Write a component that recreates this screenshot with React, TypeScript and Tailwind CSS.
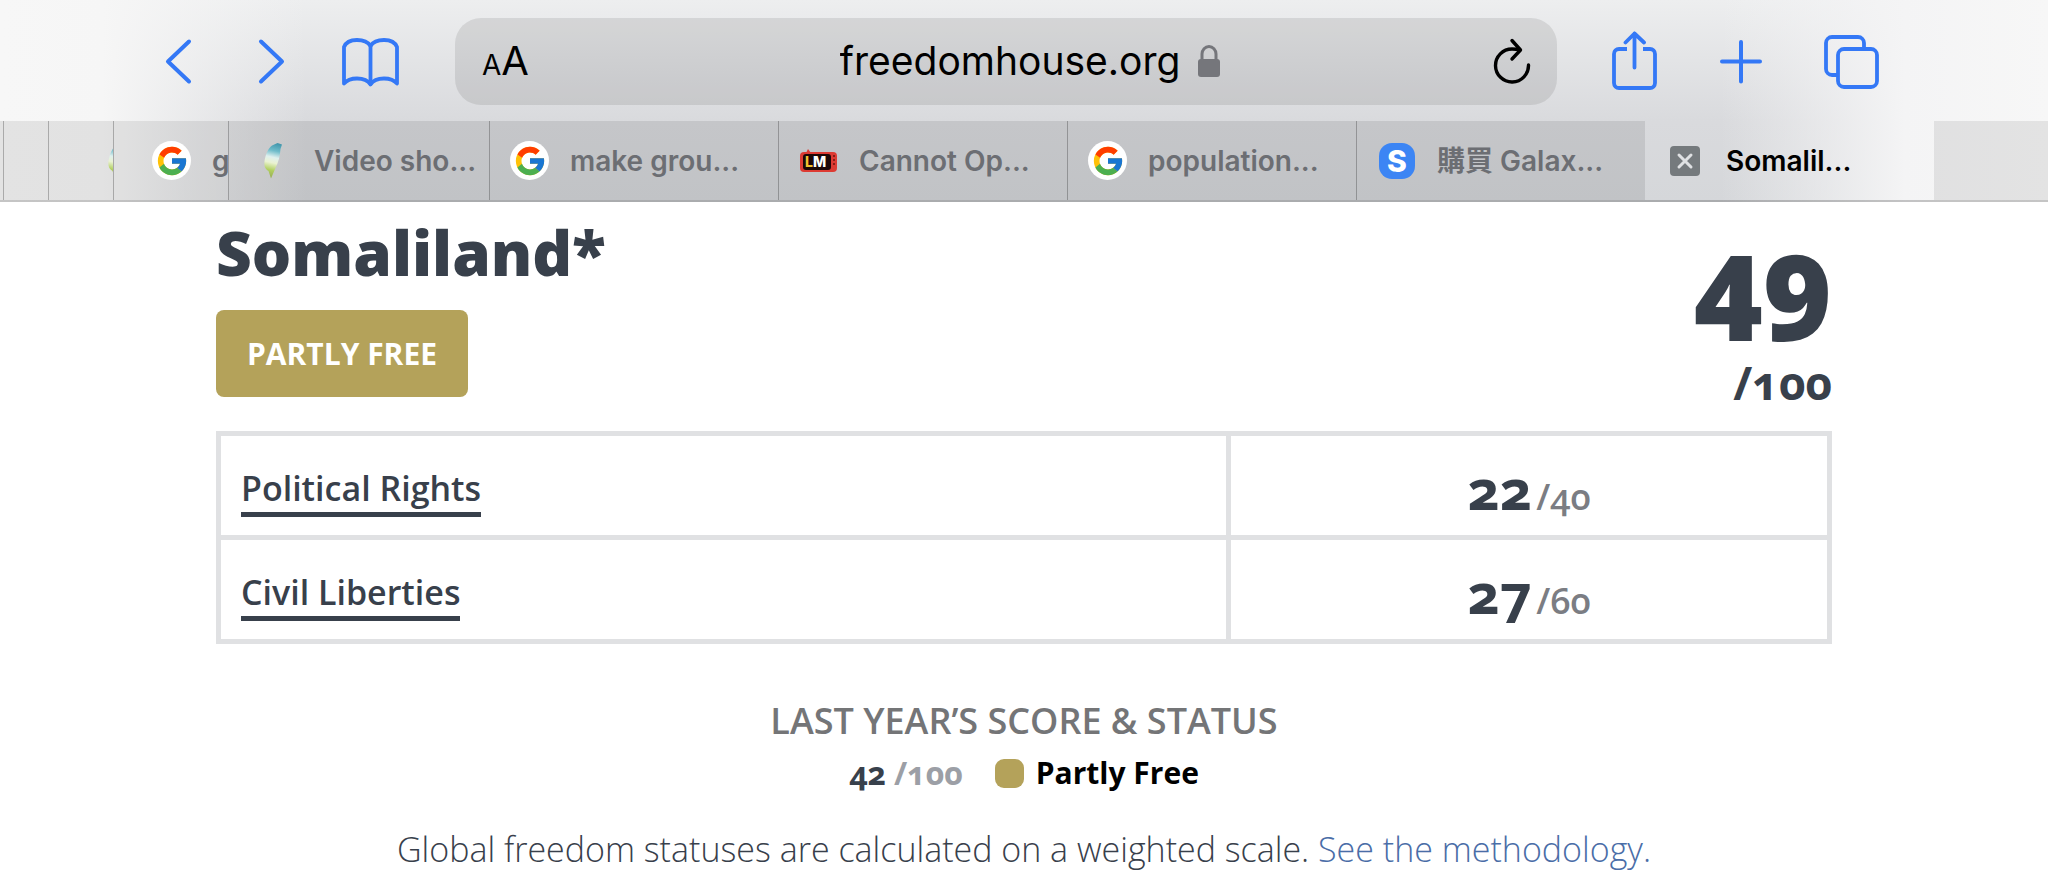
import { FcGoogle } from "react-icons/fc";

function GoogleMark() {
  return (
    <span className="flex size-[39px] shrink-0 items-center justify-center rounded-full bg-white">
      <FcGoogle className="size-[34px]" />
    </span>
  );
}

function FeatherMark() {
  return (
    <svg viewBox="0 0 39 39" className="size-[39px] shrink-0" aria-hidden="true">
      <defs>
        <linearGradient id="feather" gradientUnits="userSpaceOnUse" x1="24" y1="2" x2="16" y2="38">
          <stop offset="0" stopColor="#3f94aa" />
          <stop offset="0.22" stopColor="#6fbcca" />
          <stop offset="0.4" stopColor="#dff0ee" />
          <stop offset="0.55" stopColor="#eaf2d2" />
          <stop offset="0.75" stopColor="#b2d062" />
          <stop offset="1" stopColor="#93a850" />
        </linearGradient>
      </defs>
      <path d="M24.500 2 L29 3.500 L27.500 8 C27 15 25.500 21 22.500 27 L18 37.500 L15.500 30 C12 28 11 25 11.500 20 C12.500 14 15 7 19 4.500Z" fill="url(#feather)" />
    </svg>
  );
}

function LmMark() {
  return (
    <svg viewBox="0 0 39 39" className="size-[39px] shrink-0" aria-hidden="true">
      <rect x="1" y="11" width="37" height="20" rx="4" fill="#dd3b33" />
      <path d="M7 12 L9 8 L12 12Z" fill="#dd3b33" />
      <rect x="4" y="13" width="28" height="16" rx="3" fill="#1d0807" />
      <path d="M34 15h2M34 19h2M34 23h2" stroke="#6d1410" strokeWidth="1.500" />
      <text x="6" y="26" fontFamily="Inter, sans-serif" fontSize="14" fontWeight="800">
        <tspan fill="#f2c230">L</tspan>
        <tspan fill="#ffffff">M</tspan>
      </text>
    </svg>
  );
}

function SMark() {
  return (
    <span className="flex size-9 shrink-0 items-center justify-center rounded-[13px] bg-[#3c85f4] text-[30px] leading-none font-extrabold text-white">
      S
    </span>
  );
}

const tabs = [
  { title: "Video sho...", mark: <FeatherMark />, width: "w-[261px] pl-6 gap-[22px]" },
  { title: "make grou...", mark: <GoogleMark />, width: "w-[289px] pl-5 gap-[21px]" },
  { title: "Cannot Op...", mark: <LmMark />, width: "w-[289px] pl-5 gap-[21px]" },
  { title: "population...", mark: <GoogleMark />, width: "w-[289px] pl-5 gap-[21px]" },
  { title: "購買 Galax...", mark: <SMark />, width: "w-[288px] pl-[22px] gap-[22px]" },
];

const ratings = [
  { name: "Political Rights", score: "22", total: "/40" },
  { name: "Civil Liberties", score: "27", total: "/60" },
];

const iconButton = "flex h-[60px] w-[60px] shrink-0 items-center justify-center text-[#3478f6]";

function Toolbar() {
  return (
    <div className="flex h-[121px] items-center pt-[1px] pr-[167px] pl-[149px]">
      <nav className="flex items-center gap-8" aria-label="History">
        <button type="button" aria-label="Back" className={iconButton}>
          <svg viewBox="0 0 60 60" className="size-full" fill="none" stroke="currentColor" strokeWidth="4" strokeLinecap="round" strokeLinejoin="round">
            <path d="M40 10.500 L19 30.500 L40 50.500" />
          </svg>
        </button>
        <button type="button" aria-label="Forward" className={iconButton}>
          <svg viewBox="0 0 60 60" className="size-full" fill="none" stroke="currentColor" strokeWidth="4" strokeLinecap="round" strokeLinejoin="round">
            <path d="M20 10.500 L41 30.500 L20 50.500" />
          </svg>
        </button>
      </nav>
      <button type="button" aria-label="Bookmarks" className={`${iconButton} ml-10`}>
        <svg viewBox="0 0 60 60" className="size-full" fill="none" stroke="currentColor" strokeWidth="3.800" strokeLinecap="round" strokeLinejoin="round">
          <path d="M29.500 15 C27 11 22 9 16 9 C10 9 5 11 3 16 V52.500 C6 49 10 47.500 16 47.500 C22 47.500 27 49.500 29.500 53.500 C32 49.500 37 47.500 43 47.500 C49 47.500 53 49 56 52.500 V16 C54 11 49 9 43 9 C37 9 32 11 29.500 15Z" />
          <path d="M29.500 15V53" />
        </svg>
      </button>
      <div className="ml-[54px] flex h-[87px] flex-1 items-center justify-between rounded-[26px] bg-black/9 pr-[26px] pl-[27px] text-black">
        <button type="button" aria-label="Page settings" className="flex w-[85px] items-baseline">
          <span className="text-[28px] leading-none">A</span>
          <span className="text-[40px] leading-none">A</span>
        </button>
        <div className="flex items-center gap-[18px]">
          <input aria-label="Address" defaultValue="freedomhouse.org" className="field-sizing-content bg-transparent text-[39px] leading-[50px] outline-none" />
          <svg viewBox="0 0 22 32" className="h-8 w-[22px]" aria-hidden="true">
            <rect x="0" y="14" width="22" height="18" rx="3" fill="#75767b" />
            <path d="M4 15V9a7 7.500 0 0 1 14 0v6" fill="none" stroke="#75767b" strokeWidth="3" />
          </svg>
        </div>
        <button type="button" aria-label="Reload">
          <svg viewBox="0 0 38 46" className="h-[46px] w-[38px]" fill="none" stroke="currentColor" strokeWidth="3.400" strokeLinecap="round" strokeLinejoin="round">
            <path d="M26.500 12 C24 11 21 11 19 11 A16.500 16.500 0 1 0 35.500 27" />
            <path d="M19 2.500 L27.500 12 L19 21" />
          </svg>
        </button>
      </div>
      <div className="ml-12 flex gap-12">
        <button type="button" aria-label="Share" className={iconButton}>
          <svg viewBox="0 0 60 60" className="size-full" fill="none" stroke="currentColor" strokeWidth="3.800" strokeLinecap="round" strokeLinejoin="round">
            <path d="M22 18 H14 a5 5 0 0 0 -5 5 V52 a5 5 0 0 0 5 5 H45 a5 5 0 0 0 5 -5 V23 a5 5 0 0 0 -5 -5 H38" strokeLinecap="butt" />
            <path d="M29.500 36.500 V2.500 M20.500 11.500 L29.500 2.500 L39 11.500" />
          </svg>
        </button>
        <button type="button" aria-label="New tab" className={iconButton}>
          <svg viewBox="0 0 60 60" className="size-full" fill="none" stroke="currentColor" strokeWidth="4" strokeLinecap="round">
            <path d="M28 11 V50.500 M9 30.500 H47" />
          </svg>
        </button>
        <button type="button" aria-label="Show all tabs" className={iconButton}>
          <svg viewBox="0 0 60 60" className="size-full" fill="none" stroke="currentColor" strokeWidth="3.800" strokeLinejoin="round">
            <path d="M17 44 H11 a6 6 0 0 1 -6 -6 V12 a6 6 0 0 1 6 -6 H37 a6 6 0 0 1 6 6 V17" />
            <rect x="17" y="18" width="39" height="38" rx="6" />
          </svg>
        </button>
      </div>
    </div>
  );
}

function TabStrip() {
  return (
    <div role="tablist" className="flex h-[81px] border-b-2 border-black/20 text-[28px] font-semibold text-[#6c6e73]">
      <div className="w-1 shrink-0 border-r border-black/25 bg-black/8" />
      <div className="w-[45px] shrink-0 border-r border-black/25 bg-black/8" />
      <div className="flex w-[65px] shrink-0 items-center overflow-hidden border-r border-black/25 bg-black/8 pl-12">
        <FeatherMark />
      </div>
      <button type="button" role="tab" className="flex w-[115px] shrink-0 items-center gap-[21px] overflow-hidden border-r border-black/25 bg-black/8 pl-[38px]">
        <GoogleMark />
        <span>g</span>
      </button>
      {tabs.map((tab) => (
        <button key={tab.title} type="button" role="tab" className={`${tab.width} flex min-w-0 items-center overflow-hidden border-r border-black/25 bg-black/9 whitespace-nowrap last-of-type:border-r-0`}>
          {tab.mark}
          <span>{tab.title}</span>
        </button>
      ))}
      <div role="tab" aria-selected="true" className="flex w-[289px] min-w-0 items-center gap-[26px] pl-[25px] text-black">
        <button type="button" aria-label="Close tab" className="flex size-[30px] shrink-0 items-center justify-center rounded-[4px] bg-[#757a7d]">
          <svg viewBox="0 0 30 30" className="size-full" stroke="#dfe1e3" strokeWidth="3" strokeLinecap="round">
            <path d="M9 9 L21 21 M21 9 L9 21" />
          </svg>
        </button>
        <span>Somalil...</span>
      </div>
      <div className="min-w-0 flex-1 bg-black/8" />
    </div>
  );
}

export default function App() {
  return (
    <div className="min-h-screen bg-white font-['Open_Sans','Noto_Sans',sans-serif] text-[#38404b]">
      <header className="bg-[linear-gradient(to_right,#f7f7f7_0%,#f6f6f6_5%,transparent_15%,transparent_84%,#f4f4f5_93%,#f7f7f7_100%),linear-gradient(to_bottom,#edeeef_0%,#d9dadd_60%,#d5d7da_100%)] font-['Inter','Noto_Sans_CJK_TC',sans-serif]">
        <Toolbar />
        <TabStrip />
      </header>

      <main className="px-54 pt-[14px] oldstyle-nums">
        <section className="flex items-start justify-between">
          <div>
            <h1 className="text-[62px] leading-[72px] font-extrabold">Somaliland*</h1>
            <p className="mt-[22px] flex h-[87px] w-[252px] items-center justify-center rounded-lg bg-[#b4a25a] text-[30px] font-bold text-white">
              PARTLY FREE
            </p>
          </div>
          <p className="flex flex-col items-end pt-5 font-extrabold">
            <span className="text-[118px] leading-[120px] lining-nums">49</span>
            <span className="mt-[2px] text-[46px] leading-[48px] font-bold">/100</span>
          </p>
        </section>

        <table className="mt-[25px] w-full table-fixed border-collapse border-[5px] border-[#e0e1e3]">
          <colgroup>
            <col className="w-[62.700%]" />
            <col />
          </colgroup>
          <tbody>
            {ratings.map((rating) => (
              <tr key={rating.name} className="h-[104px] border-b-[5px] border-[#e0e1e3]">
                <th scope="row" className="border-r-[5px] border-[#e0e1e3] pt-[10px] pl-5 text-left font-normal">
                  <a href="#report" className="inline-block border-b-[5px] border-[#38404b] text-[34px] leading-[48px] font-semibold">
                    {rating.name}
                  </a>
                </th>
                <td className="pt-[10px] text-center">
                  <span className="text-[56px] leading-[60px] font-bold">{rating.score}</span>{" "}
                  <span className="text-[36px] font-semibold text-[#7b7d83]">{rating.total}</span>
                </td>
              </tr>
            ))}
          </tbody>
        </table>

        <section className="flex flex-col items-center pt-[55px]">
          <h2 className="text-[36px] leading-[44px] font-semibold text-[#747577]">LAST YEAR’S SCORE &amp; STATUS</h2>
          <p className="mt-2 flex items-center text-[30px] leading-[44px] font-bold">
            <span className="text-[32px]">42</span>
            <span className="ml-2 text-[32px] text-[#9c9fa6]">/100</span>
            <span className="ml-8 size-[29px] rounded-[9px] bg-[#b4a25a]" />
            <span className="ml-3 text-black">Partly Free</span>
          </p>
          <p className="mt-8 text-[34px] leading-[44px] font-light">
            Global freedom statuses are calculated on a weighted scale.{" "}
            <a href="#methodology" className="text-[#4a6da7]">See the methodology.</a>
          </p>
        </section>
      </main>
    </div>
  );
}
